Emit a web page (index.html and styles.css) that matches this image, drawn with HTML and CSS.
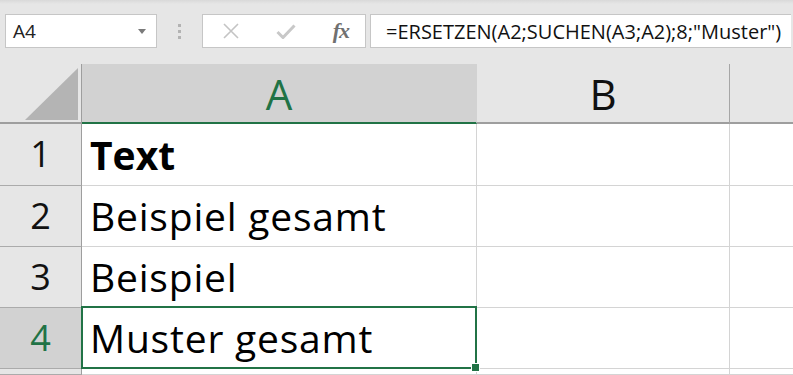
FILE: index.html
```html
<!DOCTYPE html>
<html lang="de">
<head>
    <meta charset="UTF-8">
    <title>ERSETZEN und SUCHEN</title>
    <link rel="stylesheet" href="styles.css">
</head>
<body>

<div class="toolbar">
    <div class="namebox">
        <span>A4</span>
        <svg class="caret" width="8" height="5" viewBox="0 0 8 5"><path d="M0 0h8L4 5z" fill="#7a7a7a"/></svg>
    </div>
    <div class="grip"><i></i><i></i><i></i></div>
    <div class="fxbox">
        <svg width="18" height="16" viewBox="0 0 18 16"><path d="M2 1l14 14M16 1L2 15" stroke="#c4c4c4" stroke-width="1.6" fill="none"/></svg>
        <svg width="20" height="15" viewBox="0 0 20 15"><path d="M1.5 8l5.5 5.5L18.5 1.5" stroke="#c8c8c8" stroke-width="3" fill="none"/></svg>
        <span class="fx">fx</span>
    </div>
    <div class="formula">=ERSETZEN(A2;SUCHEN(A3;A2);8;"Muster")</div>
</div>

<div class="sheet">
    <div class="corner"><svg width="53" height="52" viewBox="0 0 53 52"><path d="M53 0V52H0z" fill="#b4b4b4"/></svg></div>
    <div class="colhead active">A</div>
    <div class="colhead">B</div>
    <div class="colhead last"></div>

    <div class="rowhead">1</div>
    <div class="cell bold">Text</div>
    <div class="cell"></div>
    <div class="cell last"></div>

    <div class="rowhead">2</div>
    <div class="cell">Beispiel gesamt</div>
    <div class="cell"></div>
    <div class="cell last"></div>

    <div class="rowhead">3</div>
    <div class="cell">Beispiel</div>
    <div class="cell"></div>
    <div class="cell last"></div>

    <div class="rowhead active">4</div>
    <div class="cell current">Muster gesamt<div class="sel"><b></b></div></div>
    <div class="cell"></div>
    <div class="cell last"></div>

    <div class="rowhead"></div>
    <div class="cell"></div>
    <div class="cell"></div>
    <div class="cell last"></div>
</div>

</body>
</html>
```

FILE: styles.css
```css
body { margin: 0; background: #e6e6e6; font-family: "Open Sans", "Noto Sans", sans-serif; overflow: hidden; height: 375px; }

.toolbar { display: flex; align-items: stretch; height: 34px; padding: 14px 2px 0 5px; background: linear-gradient(#d9d9d9, #e6e6e6 4px); }
.namebox { width: 152px; box-sizing: border-box; background: white; border: 1px solid #c6c6c6; display: flex; align-items: center; justify-content: space-between; padding: 0 10px 0 7px; font-size: 19px; color: #222; }
.grip { width: 45px; display: flex; flex-direction: column; align-items: center; justify-content: center; gap: 3px; }
.grip i { width: 3px; height: 3px; background: #b3b3b3; }
.fxbox { width: 164px; box-sizing: border-box; background: white; border: 1px solid #c6c6c6; display: flex; align-items: center; justify-content: space-between; padding: 0 16px 0 19px; }
.fx { font-family: "Liberation Serif", serif; font-style: italic; font-weight: bold; font-size: 22px; color: #707070; letter-spacing: -1px; }
.formula { flex: 1; margin-left: 4px; background: white; border: 1px solid #c6c6c6; border-right: none; display: flex; align-items: center; padding-left: 15px; font-size: 20px; color: #111; white-space: nowrap; }

.sheet { margin-top: 16px; display: grid; grid-template-columns: 82px 395px 253px 1fr; grid-template-rows: 60px 62px 61px 61px 61px 1fr; height: 311px; }
.sheet > div { box-sizing: border-box; }

.corner { border-right: 1px solid #9e9e9e; border-bottom: 2px solid #9e9e9e; display: flex; align-items: flex-end; justify-content: flex-end; padding: 0 3px 2px 0; }
.colhead { border-right: 1px solid #c0c0c0; border-bottom: 2px solid #9e9e9e; display: flex; align-items: center; justify-content: center; font-size: 42px; color: #111; }
.colhead.active { background: #d2d2d2; color: #217346; border-bottom-color: #217346; border-right-color: #d2d2d2; }
.colhead:nth-child(3) { border-right-color: #a6a6a6; }
.colhead.last { border-right: none; }

.rowhead { border-right: 1px solid #9e9e9e; border-bottom: 1px solid #ababab; display: flex; align-items: center; justify-content: center; font-size: 36px; color: #111; padding-bottom: 2px; }
.rowhead.active { background: #d2d2d2; color: #217346; }

.cell { background: white; border-right: 1px solid #d4d4d4; border-bottom: 1px solid #d4d4d4; font-family: "Open Sans", Lato, sans-serif; font-size: 39px; letter-spacing: 0.8px; color: #000; display: flex; align-items: center; padding: 0 0 1px 8px; white-space: nowrap; }
.cell.last { border-right: none; }
.cell.bold { font-weight: bold; letter-spacing: 0; }
.cell.current { position: relative; }

.sel { position: absolute; left: -1px; top: -2px; right: -1px; bottom: -1px; border: 2px solid #217346; }
.sel b { position: absolute; right: -5px; bottom: -5px; width: 7px; height: 7px; background: #217346; border: 1px solid white; }
```
